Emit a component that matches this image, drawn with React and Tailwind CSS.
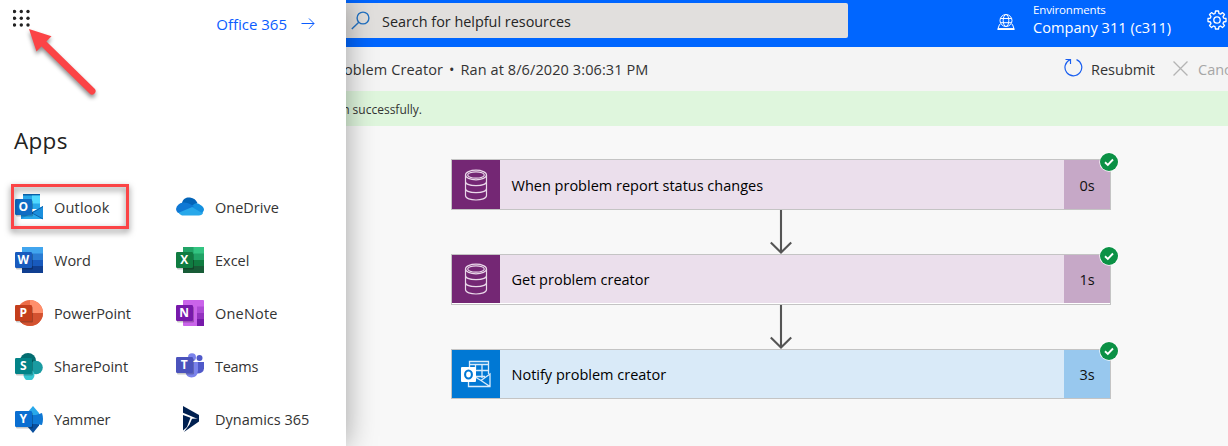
import React from "react";

const FONT = "font-['Open_Sans','Noto_Sans',sans-serif]";

function Tile({ color, letter }) {
  return (
    <g>
      <rect x="1" y="6.5" width="17" height="16" rx="1.2" fill="#000" opacity="0.22" />
      <rect x="0" y="5" width="17" height="16" rx="1.2" fill={color} />
      <text x="8.2" y="17" textAnchor="middle" fontSize="12" fontWeight="700" fill="#fff" fontFamily="Open Sans, sans-serif">{letter}</text>
    </g>
  );
}

const art = {
  Outlook: (
    <>
      <rect x="8" y="0" width="17" height="15" fill="#28a8ea" />
      <rect x="8" y="0" width="17" height="1.5" fill="#0a64ad" />
      <rect x="17" y="1.5" width="8" height="8.5" fill="#50d9ff" />
      <rect x="17" y="9.5" width="8" height="5" fill="#28a8ea" />
      <rect x="8" y="10" width="9" height="6" fill="#0364b8" />
      <path d="M6 14L17 18L28 12V25H6Z" fill="#1490df" />
      <path d="M28 12.5L16 19L28 25Z" fill="#1a8fdd" />
      <path d="M6 25L17 19L28 25Z" fill="#28a8ea" />
      <path d="M28 12.5L17 19L28 25" fill="none" stroke="#0a5ea8" strokeWidth="0.9" />
      <Tile color="#0f6cc4" letter="O" />
    </>
  ),
  Word: (
    <>
      <rect x="7" y="0" width="21" height="7" fill="#41a5ee" />
      <rect x="7" y="6.5" width="21" height="6.5" fill="#2b7cd3" />
      <rect x="7" y="13" width="21" height="6.5" fill="#185abd" />
      <rect x="7" y="19" width="21" height="7" fill="#103f91" />
      <Tile color="#185abd" letter="W" />
    </>
  ),
  PowerPoint: (
    <>
      <circle cx="15" cy="13" r="13" fill="#ed6c47" />
      <path d="M15 0A13 13 0 0 1 28 13H15Z" fill="#ff8f6b" />
      <path d="M2 13H28A13 13 0 0 1 2 13Z" fill="#d35230" />
      <Tile color="#c43e1c" letter="P" />
    </>
  ),
  SharePoint: (
    <>
      <circle cx="13" cy="8" r="8" fill="#036c70" />
      <circle cx="21" cy="14.5" r="6.8" fill="#1a9ba1" />
      <circle cx="14" cy="22" r="5.5" fill="#37c6d0" />
      <Tile color="#038387" letter="S" />
    </>
  ),
  Yammer: (
    <>
      <path d="M12 7L18 0L24 7V14H12Z" fill="#28a8ea" />
      <path d="M12 17H24V19.5L18 27L12 20Z" fill="#0a4f9e" />
      <path d="M12 9H21L27 7Q29 13 27 19L21 18H12Z" fill="#0f78d4" />
      <Tile color="#0a6ed1" letter="Y" />
    </>
  ),
  OneDrive: (
    <>
      <path d="M6 9C7 4 11 3 14 3.5C18 4 20 6 21.5 9L14 15Z" fill="#0364b8" />
      <path d="M14 13L19 9.5Q22 8.5 24.5 11Q28 13 28 16L26 20Z" fill="#1490df" />
      <path d="M2 18L15 12.5L27 19.5Q25.5 21.5 23 21.5H6Q3.5 21 2 18Z" fill="#28a8ea" />
      <path d="M0 15Q1 9.5 7 8.5Q11 8 14 10L18 12.2L2 19Q0 17 0 15Z" fill="#0f78d4" />
    </>
  ),
  Excel: (
    <>
      <rect x="7" y="0" width="11" height="13" fill="#21a366" />
      <rect x="17.5" y="0" width="10.5" height="7" fill="#33c481" />
      <rect x="17.5" y="6.5" width="10.5" height="6.5" fill="#21a366" />
      <rect x="7" y="13" width="11" height="13" fill="#185c37" />
      <rect x="17.5" y="13" width="10.5" height="6.5" fill="#107c41" />
      <rect x="17.5" y="19" width="10.5" height="7" fill="#185c37" />
      <Tile color="#107c41" letter="X" />
    </>
  ),
  OneNote: (
    <>
      <rect x="7" y="0" width="21" height="26" rx="0.8" fill="#ca64ea" />
      <rect x="21" y="6.5" width="7" height="6.5" fill="#ae4bd5" />
      <rect x="21" y="13" width="7" height="6" fill="#9332bf" />
      <rect x="21" y="19" width="7" height="7" fill="#7719aa" />
      <Tile color="#7719aa" letter="N" />
    </>
  ),
  Teams: (
    <>
      <circle cx="23.5" cy="5" r="3" fill="#5059c9" />
      <circle cx="16" cy="4.2" r="4" fill="#7b83eb" />
      <path d="M19 9H28V15.5Q27.5 20.5 21 20.5Z" fill="#5059c9" />
      <path d="M10 9H22V17.5Q21.5 24.5 15.5 24.5Q10 24 9.5 19Z" fill="#7b83eb" />
      <g transform="translate(0 -1)"><Tile color="#4b53bc" letter="T" /></g>
    </>
  ),
  "Dynamics 365": (
    <>
      <path d="M7 0L23 9V13.5L7 6.8Z" fill="#002050" />
      <path d="M7 9L14.5 11.8L11 21L7 24.5Z" fill="#002050" />
      <path d="M23 12.5V15.5L8 26L13.5 18.5L16 12.8Z" fill="#002050" />
    </>
  ),
};

function AppItem({ name, tracking = "" }) {
  return (
    <div className="flex h-[53px] items-start">
      <svg className="mt-[9px] h-[27px] w-7 shrink-0" viewBox="0 0 28 27">{art[name]}</svg>
      <span className={`ml-[11px] mt-[13px] whitespace-nowrap text-[14.5px] leading-5 text-[#333] ${tracking}`}>{name}</span>
    </div>
  );
}

function AppLauncher() {
  return (
    <aside className="relative z-10 h-full w-[346px] shrink-0 bg-white shadow-[0_0_28px_rgba(0,0,0,0.36)]">
      <div className="flex h-[126px] justify-between pl-[13px] pr-[31px]">
        <svg className="mt-[9px] h-[19px] w-[19px]" viewBox="0 0 19 19" fill="#222">
          {[2.5, 9.3, 16].flatMap((y) => [1.5, 8.3, 15].map((x) => <circle key={`${x}-${y}`} cx={x} cy={y} r="1.7" />))}
        </svg>
        <div className="mt-3.5 flex h-5 items-center gap-3.5 text-[15px] text-[#0b5cff]">
          <span className="whitespace-nowrap">Office 365</span>
          <svg className="h-3 w-[14px]" viewBox="0 0 14 12" fill="none" stroke="currentColor">
            <path d="M0.5 5.5H13M8 0.5L13 5.5L8 10.8" />
          </svg>
        </div>
      </div>
      <h2 className="h-[59px] pl-3.5 text-[22.5px] leading-[30px] font-medium tracking-[0.3px] text-[#222]">Apps</h2>
      <div className="grid grid-cols-[161px_1fr] pl-[15px]">
        <AppItem name="Outlook" tracking="tracking-[0.2px]" />
        <AppItem name="OneDrive" />
        <AppItem name="Word" />
        <AppItem name="Excel" />
        <AppItem name="PowerPoint" tracking="tracking-[-0.1px]" />
        <AppItem name="OneNote" tracking="tracking-[0.2px]" />
        <AppItem name="SharePoint" />
        <AppItem name="Teams" tracking="tracking-[-0.3px]" />
        <AppItem name="Yammer" tracking="tracking-[-0.15px]" />
        <AppItem name="Dynamics 365" />
      </div>
      <div className="absolute left-[11px] top-[184px] h-[45px] w-[118px] border-3 border-[#fb4446] drop-shadow-[0_3px_3px_rgba(0,0,0,0.5)]" />
      <svg className="absolute left-[20px] top-[20px] h-[90px] w-[90px] drop-shadow-[0_3px_2px_rgba(0,0,0,0.45)]" viewBox="20 20 90 90">
        <path d="M44 44L92 91" stroke="#fb4446" strokeWidth="7" strokeLinecap="round" />
        <path d="M29 29L51.5 36.3L36.5 51.5Z" fill="#fb4446" />
      </svg>
    </aside>
  );
}

function Header() {
  return (
    <header className="flex h-[47px] items-start bg-[#06f] text-white">
      <div className="mt-[3px] flex h-[35px] w-[502px] items-center rounded-r-xs bg-[#e1dfdd] pl-[5px]">
        <svg className="h-[19px] w-[19px]" viewBox="0 0 19 19" fill="none" stroke="#2272c3" strokeWidth="1.4">
          <circle cx="12" cy="7" r="5.9" />
          <path d="M7.8 11.2L0.8 18" />
        </svg>
        <span className="ml-3 mt-0.5 whitespace-nowrap text-[14.4px] text-[#252525]">Search for helpful resources</span>
      </div>
      <svg className="ml-[149px] mt-[14px] h-[17px] w-[18px] shrink-0" viewBox="0 0 18 17" fill="none" stroke="#fff">
        <circle cx="9" cy="6.5" r="6" />
        <ellipse cx="9" cy="6.5" rx="2.8" ry="6" />
        <path d="M3.3 4.5H14.7M3.3 8.7H14.7M3.3 10.5H2.5L0.7 15.5H17.3L15.5 10.5H14.7" />
        <path d="M1 14.8H17" strokeWidth="1.5" />
      </svg>
      <div className="ml-[18px] flex w-[174px] shrink-0 flex-col whitespace-nowrap">
        <span className="mt-[2px] text-[11.5px] leading-4 tracking-[-0.15px]">Environments</span>
        <span className="-mt-px text-[14.6px] leading-5">Company 311 (c311)</span>
      </div>
      <svg className="mt-[10px] h-5 w-5 shrink-0" viewBox="0 0 20 20" fill="none" stroke="#fff" strokeWidth="1.3" strokeLinejoin="round">
        <circle cx="10" cy="10" r="3.2" />
        <path d="M8.5 1H11.5L12 3.5L13.5 4.1L15.6 2.6L17.5 4.5L16 6.6L16.6 8.1L19 8.5V11.5L16.6 12L16 13.5L17.5 15.6L15.5 17.5L13.5 16L12 16.6L11.5 19H8.5L8 16.6L6.5 16L4.5 17.5L2.5 15.6L4 13.5L3.4 12L1 11.5V8.5L3.4 8.1L4 6.6L2.5 4.5L4.5 2.6L6.5 4.1L8 3.5Z" />
      </svg>
    </header>
  );
}

function CommandBar() {
  return (
    <div className="flex h-11 items-center bg-[#f4f4f4] text-[14.5px] whitespace-nowrap text-[#333]">
      <div className="mt-[2px] flex w-[718px] shrink-0">
        <div className="flex w-[97px] shrink-0 justify-end"><span className="tracking-[0.1px]">Problem Creator</span></div>
        <span className="ml-[6px]">•</span>
        <span className="ml-[6px] tracking-[0.1px]">Ran at 8/6/2020 3:06:31 PM</span>
      </div>
      <svg className="-mt-[3px] h-[19px] w-[19px] shrink-0" viewBox="0 0 19 19" fill="none" stroke="#1a5ff0" strokeWidth="1.2">
        <path d="M12.5 1.6A8.4 8.4 0 1 1 6 1.7M1.5 1.5H6.5V6" />
      </svg>
      <span className="ml-2 mt-[2px] w-[82px] shrink-0">Resubmit</span>
      <svg className="-mt-0.5 h-[15px] w-[15px] shrink-0" viewBox="0 0 14 14" stroke="#b4b4b4" strokeWidth="1.2">
        <path d="M0.5 0.5L13.5 13.5M13.5 0.5L0.5 13.5" />
      </svg>
      <span className="ml-[10px] mt-[2px] text-[#a6a6a6]">Cancel</span>
    </div>
  );
}

function DatabaseIcon() {
  return (
    <svg className="h-8 w-6" viewBox="0 0 24 32" fill="none" stroke="#ead9ea" strokeWidth="1.2">
      <ellipse cx="12" cy="6" rx="10.5" ry="4.8" />
      <ellipse cx="12" cy="6" rx="8.3" ry="3.2" />
      <path d="M1.5 6V26.5C1.5 32.5 22.5 32.5 22.5 26.5V6M1.5 12.5C1.5 18 22.5 18 22.5 12.5M1.5 19.5C1.5 25 22.5 25 22.5 19.5" />
    </svg>
  );
}

function OutlookGlyph() {
  return (
    <svg className="h-7 w-[30px]" viewBox="0 0 30 28" fill="none" stroke="#d9ebfa" strokeWidth="1.3">
      <path d="M8.5 7V1.5H27.5V14M8.5 4.5H27.5M14.5 4V9M21 4V18M14 10.5H27.5M14 16.5H24M7.5 20V26.5H29V14L20 20.5L29 26.5M15 17.5L20 20.5" />
      <rect x="0" y="7" width="15" height="15" rx="1" fill="#fff" stroke="none" />
      <ellipse cx="7.5" cy="14.5" rx="3.4" ry="4" stroke="#0078d4" strokeWidth="2.1" />
    </svg>
  );
}

function Step({ title, time, blue, size, inner, badge }) {
  return (
    <div className={`relative flex w-[660px] border border-[#c4c4c4] bg-white ${size}`}>
      <div className={`flex flex-1 items-center ${inner} ${blue ? "bg-[#d9eaf8]" : "bg-[#ebdfec]"}`}>
        <div className={`flex h-full w-12 items-center justify-center ${blue ? "bg-[#0078d4]" : "bg-[#742774]"}`}>
          {blue ? <OutlookGlyph /> : <DatabaseIcon />}
        </div>
        <span className="ml-[11.5px] flex-1 pt-[2px] whitespace-nowrap text-[14.5px] text-black">{title}</span>
        <div className={`flex h-full w-[46px] items-center justify-center pt-[2px] text-[14.5px] text-[#111] ${blue ? "bg-[#98c8ee]" : "bg-[#c6a8c7]"}`}>
          {time}
        </div>
      </div>
      <svg className={`absolute -right-[9px] h-5 w-5 ${badge}`} viewBox="0 0 20 20">
        <circle cx="10" cy="10" r="9.7" fill="#fff" />
        <circle cx="10" cy="10" r="9" fill="#0b9145" />
        <path d="M6 10.3L8.8 12.9L14 7.5" fill="none" stroke="#fff" strokeWidth="1.9" />
      </svg>
    </div>
  );
}

function Connector() {
  return (
    <svg className="h-11 w-6" viewBox="0 0 24 44" fill="none" stroke="#555" strokeWidth="2.1">
      <path d="M12 0V42.5M1.8 32.5L12 42.5L22.2 32.5" />
    </svg>
  );
}

export default function App() {
  return (
    <div className={`flex h-[446px] w-[1228px] overflow-hidden bg-[#f8f8f8] ${FONT}`}>
      <AppLauncher />
      <main className="flex w-[882px] flex-col">
        <Header />
        <CommandBar />
        <div className="flex h-[35px] items-center bg-[#dff6dd] pt-[2px] text-[12px] text-[#333]">
          <div className="flex w-[76px] shrink-0 justify-end whitespace-nowrap">Your flow ran successfully.</div>
        </div>
        <div className="ml-[105px] mt-[33px] flex w-[660px] flex-col items-center">
          <Step title="When problem report status changes" time="0s" size="h-[51px]" inner="h-[49px]" badge="-top-2" />
          <Connector />
          <Step title="Get problem creator" time="1s" size="h-[51px]" inner="h-12" badge="-top-[9px]" />
          <Connector />
          <Step title="Notify problem creator" time="3s" size="h-[50px]" inner="h-12" badge="-top-[9px]" blue />
        </div>
      </main>
    </div>
  );
}
